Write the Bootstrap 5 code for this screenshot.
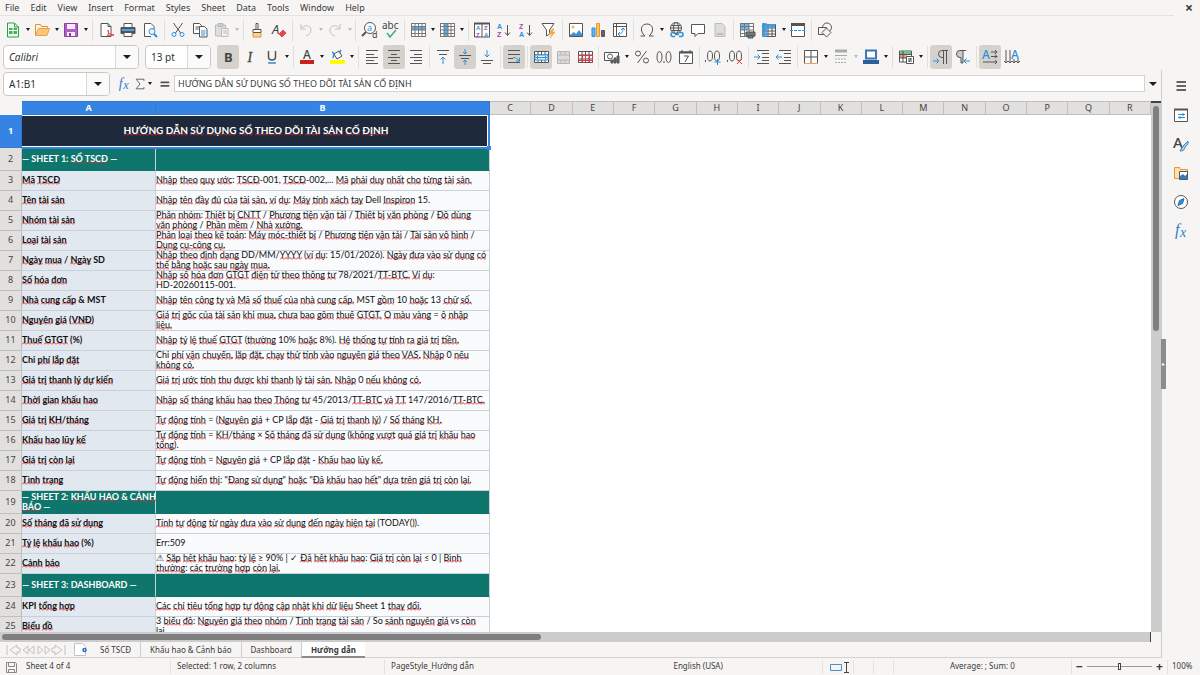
<!DOCTYPE html>
<html lang="vi">
<head>
<meta charset="utf-8">
<meta name="viewport" content="width=device-width, initial-scale=1">
<title>Hướng dẫn</title>
<link href="https://cdn.jsdelivr.net/npm/bootstrap@5.3.0/dist/css/bootstrap.min.css" rel="stylesheet">
<style>
:root{--ui:#f6f5f4;--edge:#d5d2cf;--ink:#3a3a3a;--accent:#3584e4}
body{font-family:"Noto Sans",sans-serif;font-size:9px;line-height:12px;color:var(--ink);background:var(--ui)}
button{border:0;background:none;padding:0;color:inherit;font:inherit}
svg{display:block;overflow:visible}
.menubar{height:16px;padding-right:4px}
.menus{border-bottom:1px solid #e4e2e0;margin-right:8px}
.menus a{color:inherit;text-decoration:none;padding:2px 6px 2px 5px}
.closer{font-size:14px;line-height:16px;font-weight:700;width:14px}
.toolrow{height:27px;padding-left:3px}
.toolrow.narrow{padding-left:2px}
.tool{width:22px;height:24px;border-radius:3px;flex:none}
.tool.active{background:#d5d1cd}
.tool svg{width:16px;height:16px;fill:none;stroke:#555;stroke-width:1}
.more{width:8px;height:20px;flex:none}
.narrow .more{width:7px}
.more::after,.caret::after{content:"";display:block;margin:auto;width:0;border:2px solid transparent;border-top:3px solid #1c1c1c;border-bottom:0}
.more.off::after{border-top-color:#bbb}
.caret::after{border-width:4px 4px 0}
.rule{width:5px;height:22px;flex:none;background:linear-gradient(#e2e0de,#e2e0de) center/1px 100% no-repeat}
.rule.wide{width:6px}
.combo{border:1px solid #cdc7c2;border-radius:4px;height:24px;background:#fff;overflow:hidden;flex:none}
.toolrow .combo{margin-right:6px}
.combo input{border:0;outline:0;width:0;min-width:0;padding:0 5px;font-size:10px;color:#2e3436;background:none}
.combo .caret{width:23px;flex:none;height:100%;border-left:1px solid #dcd8d4;background:#fafafa}
.formulabar{height:28px;padding-left:3px}
.formulabar .line{height:17px;border:1px solid #d5d2cf;background:#fff;color:#3a3a3a;padding:0 3px;font-size:9px;outline:0}
.gridarea{min-height:0;margin-top:3px}
.sheet{border-collapse:separate;border-spacing:0;table-layout:fixed;width:100%;font-family:Lato,sans-serif;font-size:9px;line-height:10px;color:#111}
.sheet th{font-family:"Noto Sans",sans-serif;font-size:9px;font-weight:400;color:#444;text-align:center;background:#e1e0df;border-right:1px solid #bfbfbf;border-bottom:1px solid #bfbfbf;padding:0}
.sheet thead th{height:14px;line-height:12px;border-top:1px solid #bfbfbf}
.sheet thead th:first-child{background:var(--ui);border-color:var(--ui)}
.sheet th.on,.sheet thead th.on{background:var(--accent);border-color:#3078d0;color:#fff;font-weight:700}
.sheet td{padding:0;background:#fff}
.sheet .key,.sheet .val{border-right:1px solid #cbd0d6;border-bottom:1px solid #cbd0d6}
.sheet .key{background:#e2e8f0;font-weight:700}
.sheet .val{background:#f9fbfd}
.sheet .band td.key,.sheet .band td.val{background:#0f766e;color:#fff;font-weight:700;border-bottom-color:#0f766e}
.sheet td.heading{background:#1e293b;color:#fff;font-size:10px;font-weight:700;line-height:14px;position:relative}
.box{height:19px;overflow:hidden;display:flex;align-items:center;white-space:nowrap}
.band .box{height:22px;overflow:visible}
.heading .box{height:33px;justify-content:center;padding-bottom:2px}
.selection{position:absolute;inset:0 0 -1px 0;border:solid var(--accent);border-width:0 2px 2px 0;box-shadow:inset -1px -1px #fff,inset 0 1px #fff}
.grip{position:absolute;right:-1px;bottom:-2px;width:4px;height:4px;background:var(--accent)}
.miss{background:url("data:image/svg+xml,%3Csvg xmlns='http://www.w3.org/2000/svg' width='4' height='3'%3E%3Cpath d='M0 2.500L2 .500L4 2.500' fill='none' stroke='%23e3262b' stroke-width='1'/%3E%3C/svg%3E") left bottom repeat-x}
.vtrack{width:10px;flex:none;background:#ccc;border-top:2px solid #444;padding:3px 2px}
.vthumb{height:43%;background:#7f7f7f;border-radius:3px}
.htrack{height:10px;background:#ccc;padding:2px;margin-right:10px;border-right:1px solid #444}
.hthumb{height:6px;width:47%;background:#7f7f7f;border-radius:3px}
.deck{width:39px;flex:none;border-left:1px solid #cfcdcb;position:relative;padding-top:1px}
.deck .pane{height:29px}
.deck svg{width:16px;height:16px;fill:none;stroke:#555}
.handle{position:absolute;left:-1px;top:269px;width:5px;height:50px;background:#8c8c8c;color:#fff;font-size:6px;line-height:50px;text-align:center;overflow:hidden}
.tabs{height:16px;font-size:8px;border-bottom:1px solid #d5d2cf}
.tabs a{color:inherit;text-decoration:none;padding:0 9px;line-height:15px}
.tabs a+a{border-left:1px solid #cfcdcb}
.tabs a.current{background:#fff;font-weight:700;border-bottom:2px solid #8b8b8b;height:16px}
.status{height:17px;font-size:8px}
.status>div{padding:0 6px;height:14px}
.status>div+div{border-left:1px solid #e4e2e0}
.step{font-size:12px;line-height:12px;font-weight:700}
.zoomer{appearance:none;width:65px;height:8px;background:linear-gradient(#999,#999) center/100% 1px no-repeat}
.zoomer::-webkit-slider-thumb{appearance:none;width:3px;height:7px;border:1px solid #444;background:#fff}
</style>
</head>
<body>
<div class="d-flex flex-column vh-100 overflow-hidden">
  <header>
    <div class="menubar d-flex">
      <nav class="menus d-flex flex-grow-1" id="menus"></nav>
      <button class="closer" aria-label="Close">×</button>
    </div>
    <div class="toolrow narrow d-flex align-items-center" id="standard"></div>
    <div class="toolrow d-flex align-items-center">
      <div class="combo d-flex" style="width:136px"><input class="flex-grow-1 fst-italic" aria-label="Font name" value="Calibri"><button class="caret" aria-label="Font list"></button></div>
      <div class="combo d-flex" style="width:66px"><input class="flex-grow-1" aria-label="Font size" value="13 pt"><button class="caret" aria-label="Size list"></button></div>
      <div class="d-flex align-items-center" id="formatting"></div>
    </div>
  </header>
  <div class="d-flex flex-grow-1" style="min-height:0">
    <main class="d-flex flex-column flex-grow-1" style="min-width:0">
      <div class="formulabar d-flex align-items-center">
        <div class="combo d-flex" style="width:107px"><input class="flex-grow-1" aria-label="Name box" value="A1:B1"><button class="caret" aria-label="Ranges"></button></div>
        <div class="d-flex align-items-center ps-1" id="functions"></div>
        <input class="line flex-grow-1" aria-label="Formula" value="HƯỚNG DẪN SỬ DỤNG SỔ THEO DÕI TÀI SẢN CỐ ĐỊNH">
        <button class="caret px-1" aria-label="Expand formula bar"></button>
      </div>
      <div class="gridarea d-flex flex-grow-1">
        <div class="flex-grow-1 overflow-hidden bg-white">
          <table class="sheet">
            <colgroup id="cols"><col style="width:22px"><col style="width:134px"><col style="width:334px"></colgroup>
            <thead><tr id="letters"></tr></thead>
            <tbody id="rows"></tbody>
          </table>
        </div>
        <div class="vtrack"><div class="vthumb"></div></div>
      </div>
      <div class="htrack"><div class="hthumb"></div></div>
      <nav class="tabs d-flex">
        <svg width="100" height="15" fill="none" stroke="#c4c2c0"><path d="M7 3v10M17 3l-7 5 7 5v-3h3V6h-3zM28 4l-5 4 5 4zM34 4l-5 4 5 4zM38 4l5 4-5 4zM45 4l5 4-5 4zM55 3l7 5-7 5v-3h-3V6h3zM65 3v10"/><path d="M74.500 1.500h8l3 3v9h-11z" fill="#fff"/><circle cx="84.500" cy="8" r="1.500" stroke="#2a6fc9" stroke-width="1.500"/></svg>
        <a href="#s1" class="ps-0">Số TSCĐ</a><a href="#s2">Khấu hao &amp; Cảnh báo</a><a href="#s3">Dashboard</a><a href="#s4" class="current">Hướng dẫn</a>
      </nav>
    </main>
    <aside class="deck d-flex flex-column" id="deck"><button class="handle" aria-label="Hide sidebar">▸</button></aside>
  </div>
  <footer class="status d-flex align-items-center">
    <div class="px-1"><svg width="14" height="14" fill="none" stroke="#888"><path d="M2.500 2.500h9l1 1v9h-10zM4.500 2.500v4h6v-4M4.500 12.500v-3h6v3"/></svg></div>
    <div class="border-0 px-1" style="flex:149 1 0">Sheet 4 of 4</div>
    <div style="flex:214 1 0">Selected: 1 row, 2 columns</div>
    <div style="flex:189 1 0">PageStyle_Hướng dẫn</div>
    <div class="text-center border-0" style="flex:250 1 0">English (USA)</div>
    <div style="width:31px"><svg width="20" height="14" fill="none"><path d="M1.500 4.500h11v6h-11z" stroke="#3f94c8"/><path d="M15 2.500h5M17.500 3v9M15 12.500h5" stroke="#444"/></svg></div>
    <div style="width:20px"></div><div style="width:20px"></div>
    <div class="text-center" style="flex:176 1 0">Average: ; Sum: 0</div>
    <div class="d-flex align-items-center justify-content-center gap-1" style="width:96px"><button class="step" aria-label="Zoom out">−</button><input type="range" class="zoomer" aria-label="Zoom"><button class="step" aria-label="Zoom in">+</button></div>
    <div class="px-1" style="width:33px">100%</div>
  </footer>
</div>
<script src="https://cdn.jsdelivr.net/npm/bootstrap@5.3.0/dist/js/bootstrap.bundle.min.js"></script>
<script>
const p = (d, a = '') => `<path d="${d}" ${a}/>`;
const BLUE = 'stroke="#2e8fd8"', RED = 'stroke="#e0383e"';
const glyph = (s, x, y, size, a = '') => `<text x="${x}" y="${y}" font-size="${size}" stroke="none" fill="#444" ${a}>${s}</text>`;
const letterA = (x, y, size) => glyph('A', x, y, size, 'font-family="Liberation Sans" font-weight="700" style="fill:#2e8fd8"');
const letterZ = (x, y, size) => glyph('Z', x, y, size, 'font-family="Liberation Sans" font-weight="700" style="fill:#a347ba"');
const grid = 'M1.500 2.500h14v11h-14zM1.500 6h14M1.500 10h14M5 2.500v11M8.500 2.500v11M12 2.500v11';
const icons = {
  'New': p('M2.500 1h7l4 4v10h-11z','fill="#eefaf0" stroke="#2f9e44"')+p('M4 6h8v6H4z','fill="#45b35c" stroke="none"')+p('M4 8.500h8M8 6v6','stroke="#fff"')+p('M9.500 1v4h4','stroke="#2f9e44"'),
  'Open': p('M1.500 13.500v-11h5l1 2h6v2','fill="#fff0d8" stroke="#e09434"')+p('M1.500 13.500l3-7h11l-2.500 7z','fill="#fbc77a" stroke="#e8a14a"'),
  'Save': p('M1.500 1.500h13v13h-13z','fill="#b060c4" stroke="#8e3fa6"')+p('M4 2h8v5H4zM4 10h8v4H4z','fill="#f7ecfa" stroke="none"')+p('M6 11h2v3H6z','fill="#8e3fa6" stroke="none"'),
  'Export PDF': p('M3 1.500h7l3 3v10H3z','fill="#fff"')+p('M10 1.500v3h3')+p('M8 15c3-3 3-5 2-7 0 4 3 5 6 5-3-.5-6 .5-8 2z','stroke="#e0383e"'),
  'Print': p('M4 1.500h8v4H4z','fill="#fff"')+p('M1 5.500h14v6H1z','fill="#555"')+p('M2 8h12','stroke="#4aa3e0" stroke-width="2"')+p('M4 10.500h8v4H4z','fill="#fff"'),
  'Preview': p('M12 7V4.500l-3-3H2.500v13H9','fill="#fff"')+'<circle cx="10" cy="9.500" r="3" stroke="#2e8fd8" fill="#e7f4fd"/>'+p('M12 12l3 3','stroke="#2e8fd8" stroke-width="2"'),
  'Cut': p('M3.500 1l7 10M12.500 1l-7 10')+'<circle cx="4" cy="12.500" r="2" stroke="#2e8fd8"/><circle cx="12" cy="12.500" r="2" stroke="#2e8fd8"/>',
  'Copy': p('M1.500 1.500h6l2 2v8h-8zM3.500 5h4M3.500 7h3','fill="#fff"')+p('M7.500 4.500h5l2.500 2.500v8H7.500z','fill="#fff"')+p('M9 9h4.500M9 11h4.500M9 13h4','stroke="#2e8fd8"'),
  'Paste': p('M1.500 3h10v11h-10z','fill="#ddd" stroke="#bbb"')+p('M4 1.500h5v3H4z','fill="#ccc" stroke="#bbb"')+p('M7.500 6.500h6.500v8H7.500zM9 9h4M9 11h4','fill="#f3f3f3" stroke="#bbb"'),
  'Clone': p('M7 1.500h2v6H7z','fill="#fff"')+p('M4 7.500h8v3H4z','fill="#fff"')+p('M4 11v4h8v-4','fill="#ffd28a" stroke="#e8962e"'),
  'Clear': glyph('A',1,12,13,'font-style="italic"')+p('M8 12l4-4 3 3-4 4z','fill="#e5484d" stroke="#e5484d"'),
  'Undo': p('M3 2v5h5M3 7c3-5 10-4 10 1 0 3-2 5-5 6','stroke="#c4c2c0"'),
  'Redo': p('M13 2v5H8M13 7C10 2 3 3 3 8c0 3 2 5 5 6','stroke="#c4c2c0"'),
  'Find': '<circle cx="9" cy="6" r="5.500" fill="#fff"/>'+p('M5 10l-4 4','stroke-width="2"')+glyph('a',6,9,9,'style="fill:#2e8fd8"')+glyph('d',11,16,9),
  'Spelling': glyph('abc',-1,7,10)+p('M4 11l3 4 6-7','stroke="#3fae72" stroke-width="1.500"'),
  'Row': p('M1.500 1.500h14v13h-14z','fill="#fff"')+p('M1 4h15v4H1z','fill="#55aee8" stroke="none"')+p('M1.500 1.500h14v13h-14zM1.500 4.500h14M1.500 8h14M1.500 11.500h14M5 1.500v13M8.500 1.500v13M12 1.500v13','stroke="#777"'),
  'Column': p('M1.500 1.500h14v13h-14z','fill="#fff"')+p('M5 1h4v14H5z','fill="#55aee8" stroke="none"')+p('M1.500 1.500h14v13h-14zM1.500 4.500h14M1.500 8h14M1.500 11.500h14M5 1.500v13M9 1.500v13M12 1.500v13','stroke="#777"'),
  'Sort': p('M.500 1.500h15v13.500h-15zM8 1.500v13.500','fill="#fff"')+p('M0 1.500h16','stroke-width="2"')+letterA(2,8,6)+letterZ(2,15,6)+letterZ(10,8,6)+letterA(10,15,6),
  'Sort up': letterA(1,7,7)+letterZ(1,15,7)+p('M11.500 3v10M9 10.500l2.500 3 2.500-3'),
  'Sort down': letterZ(1,7,7)+letterA(1,15,7)+p('M11.500 3v10M9 10.500l2.500 3 2.500-3'),
  'Filter': p('M2 1.500h12L9.500 8v4L6.500 14V8z','fill="#fff"')+p('M12 7l-3 5h3l-2 4 5-6h-3l2-3z','fill="#f7a93b" stroke="#f19a24" stroke-width=".500"'),
  'Image': p('M1.500 1.500h13v13h-13z','fill="#fff"')+'<circle cx="5" cy="5" r="1.500" fill="#f9b552" stroke="none"/>'+p('M2 13l4-3 2 2 3-4 3 4v2H2z','fill="#3c94d6" stroke="none"'),
  'Chart': p('M2 6h3v8.500H2z','fill="#62b5ec" stroke="#2e8fd8"')+p('M6.500 1.500h3v13h-3z','fill="#ffc171" stroke="#e8962e"')+p('M11.500 8.500h3v6h-3z','fill="#666"'),
  'Pivot': p('M1.500 1.500h13v13h-13zM1.500 4.500h13M4.500 1.500v13','fill="#fff"')+p('M6 12c4 0 5-2 5-6M9 8l2-2 2 2M8 10l-2 2 2 2',BLUE),
  'Symbol': p('M1.500 14h4.500c-6-5-4-12 2-12s8 7 2 12h4.500'),
  'Link': '<circle cx="8" cy="6" r="5.500"/><ellipse cx="8" cy="6" rx="2.500" ry="5.500"/>'+p('M2.500 6h11M3.500 3.500h9M3.500 8.500h9')+p('M7 10.500H5a2 2 0 000 4h2M11 10.500h2a2 2 0 010 4h-2M7 12.500h4','stroke="#2e8fd8" stroke-width="1.500"'),
  'Comment': p('M1.500 2.500h13v9H8l-3 3v-3H1.500z','fill="#fff"'),
  'Header': p('M3 1.500h7l3 3v10H3z','fill="#ddd" stroke="#bbb"')+p('M5 11h6v2H5z','fill="#bbb" stroke="none"'),
  'Print area': p('M1.500 1.500h13v13h-13z','fill="#fff"')+p('M1 1h9v7H1z','fill="#6bb8ee" stroke="none"')+p('M1.500 1.500h13v13h-13zM1.500 4.500h13M1.500 8h13M1.500 11.500h13M5.500 1.500v13M10 1.500v13','stroke="#777"')+p('M7 10h9v4H7z','fill="#777"')+p('M9 14h5v2H9z','fill="#4aa3e0"'),
  'Freeze': p('M1.500 2.500h13v12h-13zM1.500 6h13M1.500 9h13M1.500 12h13M7 2.500v12M11 2.500v12','fill="#fff"')+p('M1 1h5v14H1zM5 2h9v4H5z','fill="#4aa3e0" stroke="none" opacity=".85"')+p('M3 1v13M1 4h13M3 8h2',BLUE),
  'Split': p('M1.500 1.500h13v13h-13z','fill="#fff"')+p('M1 2.500h14','stroke-width="3"')+p('M0 8.500h16','stroke="#2e8fd8" stroke-dasharray="3 1"'),
  'Shapes': '<circle cx="10" cy="5.500" r="4.500"/>'+p('M1.500 5.500h8v7h-8z','fill="#f6f5f4"')+p('M9.500 6l4.500 4.500-4.500 4.500L5 10.500z','fill="#f6f5f4"'),
  'Bold': glyph('B',4,12.500,13,'font-weight="700"'),
  'Italic': glyph('I',5.500,12.500,14,'font-style="italic" font-family="Liberation Serif" style="stroke:#444;stroke-width:.3px"'),
  'Underline': p('M4.500 2v6c0 4 7 4 7 0V2','stroke-width="1.500"')+p('M4 14h8','stroke="#2e8fd8" stroke-width="1.500"'),
  'Font color': glyph('A',4,10,12,'font-weight="500"')+p('M1 13h14','stroke="#c9211e" stroke-width="4"'),
  'Highlight': p('M5 5l5-3 3 5-5 3z','fill="#fff"')+p('M3 3c2 0 2 3 1 6M12 1l-2 3','stroke="#2e8fd8" stroke-width="1.500"')+p('M1 13h15','stroke="#ffff00" stroke-width="4"'),
  'Left': p('M2 1.500h12M2 5.500h8M2 8.500h12M2 11.500h8M2 14.500h12'),
  'Center': p('M2 1.500h12M5 5.500h6M2 8.500h12M5 11.500h6M2 14.500h12'),
  'Right': p('M2 1.500h12M6 5.500h8M2 8.500h12M6 11.500h8M2 14.500h12'),
  'Top': p('M2 1.500h12M4 5.500h8')+p('M8 15V8M5.500 10.500L8 8l2.500 2.500',BLUE),
  'Middle': p('M2 6.500h12M4 9.500h8')+p('M8 0v5M6 3l2 2 2-2M8 16v-5M6 13l2-2 2 2',BLUE),
  'Bottom': p('M2 11.500h12M4 14.500h8')+p('M8 1v7M5.500 5.500L8 8l2.500-2.500',BLUE),
  'Wrap': p('M2 1.500h12M2 5.500h12M2 9.500h5M2 13.500h12')+p('M7 8.500c3 0 5 1 6 4M10 12h3.500V8.500',BLUE),
  'Merge': p(grid,'fill="#fff"')+p('M2 6h13v5H2z','fill="#e0f2ff" stroke="#2e8fd8"')+p('M3 8.500h11M5 7L3.500 8.500 5 10M12 7l1.500 1.500L12 10',BLUE),
  'Merge cells': p('M2.500 2.500h12v12h-12zM2.500 6h12M2.500 11h12M6 2.500V6M10 2.500V6M6 11v3.500M10 11v3.500','stroke="#b8b6b4" fill="#ddd"'),
  'Unmerge': p(grid,'fill="#fff"')+p('M1.500 6.500h14v5h-14zM5.500 6.500v7M8.500 6.500v7M12.500 6.500v7',RED),
  'Currency': p('M.500 3.500h14v8h-14z','fill="#fff"')+'<circle cx="6" cy="7.500" r="2.500"/>'+p('M7 14V11h2v3zM10 14V9h2v5zM13 14V7h2v7z','fill="#666"'),
  'Percent': '<circle cx="4" cy="4.500" r="2.500"/><circle cx="12" cy="11.500" r="2.500"/>'+p('M12.500 2l-9 12'),
  'Number': '<ellipse cx="3.500" cy="8" rx="2.500" ry="5.500"/><ellipse cx="12.500" cy="8" rx="2.500" ry="5.500"/>'+p('M8 12v2'),
  'Date': p('M1.500 3h13v11.500h-13z','fill="#fff"')+p('M1 3.500h14','stroke-width="2"')+p('M4 1v3M12 1v3M6 7h4.500L7 13'),
  'Add decimal': '<ellipse cx="5" cy="7" rx="2.500" ry="5"/><ellipse cx="12" cy="7" rx="2.500" ry="5"/>'+p('M.500 11v2')+p('M9.500 13h6M12.500 10v6',BLUE),
  'Delete decimal': '<ellipse cx="5" cy="7" rx="2.500" ry="5"/><ellipse cx="12" cy="7" rx="2.500" ry="5"/>'+p('M.500 11v2')+p('M10 10l5 5M15 10l-5 5',RED),
  'Indent': p('M3 1.500h12M8 4.500h7M8 8.500h7M8 11.500h7M3 14.500h12')+p('M0 8h6M3.500 5.500L6 8l-2.500 2.500',BLUE),
  'Outdent': p('M3 1.500h12M8 4.500h7M8 8.500h7M8 11.500h7M3 14.500h12')+p('M6 8H0M2.500 5.500L0 8l2.500 2.500',BLUE),
  'Borders': p('M1.500 1.500h13v13h-13zM8 1.500v13M1.500 8h13','fill="#fff"')+p('M1 14.500h14','stroke="#e8a15a"'),
  'Line style': p('M2 2h12','stroke-width="3" stroke="#aaa"')+p('M2 6.500h12','stroke="#aaa"')+p('M2 10h12M2 13.500h12','stroke="#aaa" stroke-dasharray="2 1"'),
  'Border color': p('M3 1.500h10v8H3z','fill="#fff" stroke="#3d74b8" stroke-width="2"')+p('M0 13h16','stroke="#2a6099" stroke-width="4"'),
  'Conditional': p('M1.500 2h12v11h-12z','fill="#fff"')+p('M2 2h11v3H2z','fill="#6dc486" stroke="none"')+p('M2 6h7v3H2z','fill="#f2938f" stroke="none"')+p('M1.500 5.500h12M1.500 9h7M5 2v11')+p('M8.500 7.500h7v7h-7zM10 10h4M10 12h4M13 9l-2 4','fill="#fff"'),
  'LTR': p('M15 1.500H9a3.500 3.500 0 000 7h1M10.500 1.500V15M13.500 1.500V15')+p('M0 12h6M3.500 9.500L6 12l-2.500 2.500',BLUE),
  'RTL': p('M11 1.500H5a3.500 3.500 0 000 7h1V14h2V1.500','fill="#ccc"')+p('M15 12H9M11.500 9.500L9 12l2.500 2.500',BLUE),
  'Horizontal text': glyph('A',0,10,12,'font-weight="500" style="fill:#2e8fd8"')+p('M9 3h6M9 7.500h6M1 13h14M13 1l2 2-2 2M13 5.500l2 2-2 2M13 11l2 2-2 2'),
  'Vertical text': glyph('A',7,10,12,'font-weight="500" style="fill:#2e8fd8"')+p('M2 1v13M6 1v13M10 10v4M14 10v4M0 12l2 2 2-2 2 2 2-2 2 2 2-2 2 2 2-2'),
  'Function': glyph('f',2,12,16,'font-style="italic" font-family="Liberation Serif" style="fill:#2e7fc8"')+glyph('x',7,14,14,'font-style="italic" font-family="Liberation Serif" style="fill:#2e7fc8"'),
  'Sum': p('M12.500 4.500V2.500H3.500L8 8l-4.500 5.500h9v-2'),
  'Equals': p('M4 6h10M4 10h10','stroke-width="2"'),
  'Menu': p('M3.500 4h9.500M3.500 8h9.500M3.500 12h9.500','stroke-width="1.500" stroke="#333"'),
  'Properties': p('M1.500 2.500h13v12h-13z','fill="#fff"')+p('M1 2.500h14','stroke-width="2"')+p('M5 7.500h7M5 10.500h7M10 6v3M7 9v3',BLUE),
  'Styles': glyph('A',0,12,15,'font-weight="500"')+p('M15 5l-5 5-3 5c4 0 5-2 5-4l3-3z','fill="#9fd0f2" stroke="#3c82bd"'),
  'Gallery': p('M1.500 13.500v-11h5l1 2h7v9z','fill="#fce0b5" stroke="#e8962e"')+p('M6.500 6.500h8v8h-8z','fill="#fff"')+p('M7 14v-3l3-2 2 2 2-2v5z','fill="#2e7fc8" stroke="none"'),
  'Navigator': '<circle cx="8" cy="8" r="6.500" fill="#fff"/>'+p('M11 4.500L9.500 9.500 5 11.500l1.500-5z','fill="#2e8fd8" stroke="#2e6fa8"')
};
const pressed = new Set(['Bold','Center','Middle','Wrap','Merge','LTR','Horizontal text']);
/* "|" is a separator, "||" a wider one, "v" a drop-down arrow, "o" a disabled arrow */
function bar(id, list) {
  document.getElementById(id).innerHTML = list.split(',').map(n =>
    n === '|' ? '<span class="rule"></span>' :
    n === '||' ? '<span class="rule wide"></span>' :
    n === 'v' ? '<button class="more" aria-label="More"></button>' :
    n === 'o' ? '<button class="more off" aria-label="More" disabled></button>' :
    `<button class="tool d-flex align-items-center justify-content-center${pressed.has(n) ? ' active' : ''}" aria-label="${n}"><svg viewBox="0 0 16 16">${icons[n]}</svg></button>`).join('');
}
bar('standard','New,v,Open,v,Save,v,||,Export PDF,Print,Preview,||,Cut,Copy,Paste,o,||,Clone,Clear,|,Undo,o,Redo,o,|,Find,Spelling,|,Row,v,Column,v,||,Sort,Sort up,Sort down,Filter,||,Image,Chart,Pivot,|,Symbol,v,Link,Comment,Header,|,Print area,Freeze,v,Split,|,Shapes');
bar('formatting','Bold,Italic,Underline,v,|,Font color,v,Highlight,v,|,Left,Center,Right,|,Top,Middle,Bottom,|,Wrap,|,Merge,Merge cells,Unmerge,|,Currency,v,Percent,Number,Date,|,Add decimal,Delete decimal,|,Indent,Outdent,|,Borders,v,Line style,o,Border color,v,|,Conditional,v,|,LTR,RTL,|,Horizontal text,Vertical text');
document.getElementById('functions').innerHTML = ['Function','Sum','','Equals'].map(n => n
  ? `<button class="tool d-flex align-items-center justify-content-center" style="width:${n === 'Sum' ? 12 : 20}px" aria-label="${n}"><svg viewBox="0 0 16 16" style="width:14px">${icons[n]}</svg></button>`
  : '<button class="more" aria-label="More sums"></button>').join('');
document.getElementById('deck').insertAdjacentHTML('beforeend', ['Menu','Properties','Styles','Gallery','Navigator','Function'].map(n =>
  `<button class="pane d-flex align-items-center justify-content-center" aria-label="${n}"><svg viewBox="0 0 16 16">${icons[n]}</svg></button>`).join(''));
document.getElementById('menus').innerHTML = 'File Edit View Insert Format Styles Sheet Data Tools Window Help'.split(' ').map(m => `<a href="#">${m}</a>`).join('');

const letters = [...'ABCDEFGHIJKLMNOPQR'];
document.getElementById('cols').insertAdjacentHTML('beforeend', '<col>'.repeat(16));
document.getElementById('letters').innerHTML = '<th></th>' + letters.map((l, i) => `<th class="${i < 2 ? 'on' : ''}">${l}</th>`).join('');

/* words the spelling checker accepts */
const known = new Set('SHEET DASHBOARD MST SD Sheet Dell Chi KPI Err TODAY DD MM HD CP So vs VND'.split(' '));
const spell = t => t.replace(/[\p{L}]+(-[\p{L}]+)?[.,]?/gu, w => known.has(w.replace(/[.,]$/, '')) || w === 'br' ? w : `<span class="miss">${w}</span>`);
const sheet = [
  ['— SHEET 1: SỔ TSCĐ —'],
  ['Mã TSCĐ','Nhập theo quy ước: TSCĐ-001, TSCĐ-002,... Mã phải duy nhất cho từng tài sản.'],
  ['Tên tài sản','Nhập tên đầy đủ của tài sản, ví dụ: Máy tính xách tay Dell Inspiron 15.'],
  ['Nhóm tài sản','Phân nhóm: Thiết bị CNTT / Phương tiện vận tải / Thiết bị văn phòng / Đồ dùng<br>văn phòng / Phần mềm / Nhà xưởng.'],
  ['Loại tài sản','Phân loại theo kế toán: Máy móc-thiết bị / Phương tiện vận tải / Tài sản vô hình /<br>Dụng cụ-công cụ.'],
  ['Ngày mua / Ngày SD','Nhập theo định dạng DD/MM/YYYY (ví dụ: 15/01/2026). Ngày đưa vào sử dụng có<br>thể bằng hoặc sau ngày mua.'],
  ['Số hóa đơn','Nhập số hóa đơn GTGT điện tử theo thông tư 78/2021/TT-BTC. Ví dụ:<br>HD-20260115-001.'],
  ['Nhà cung cấp & MST','Nhập tên công ty và Mã số thuế của nhà cung cấp. MST gồm 10 hoặc 13 chữ số.'],
  ['Nguyên giá (VNĐ)','Giá trị gốc của tài sản khi mua, chưa bao gồm thuế GTGT. Ô màu vàng = ô nhập<br>liệu.'],
  ['Thuế GTGT (%)','Nhập tỷ lệ thuế GTGT (thường 10% hoặc 8%). Hệ thống tự tính ra giá trị tiền.'],
  ['Chi phí lắp đặt','Chi phí vận chuyển, lắp đặt, chạy thử tính vào nguyên giá theo VAS. Nhập 0 nếu<br>không có.'],
  ['Giá trị thanh lý dự kiến','Giá trị ước tính thu được khi thanh lý tài sản. Nhập 0 nếu không có.'],
  ['Thời gian khấu hao','Nhập số tháng khấu hao theo Thông tư 45/2013/TT-BTC và TT 147/2016/TT-BTC.'],
  ['Giá trị KH/tháng','Tự động tính = (Nguyên giá + CP lắp đặt - Giá trị thanh lý) / Số tháng KH.'],
  ['Khấu hao lũy kế','Tự động tính = KH/tháng × Số tháng đã sử dụng (không vượt quá giá trị khấu hao<br>tổng).'],
  ['Giá trị còn lại','Tự động tính = Nguyên giá + CP lắp đặt - Khấu hao lũy kế.'],
  ['Tình trạng','Tự động hiển thị: "Đang sử dụng" hoặc "Đã khấu hao hết" dựa trên giá trị còn lại.'],
  ['— SHEET 2: KHẤU HAO & CẢNH<br>BÁO —'],
  ['Số tháng đã sử dụng','Tính tự động từ ngày đưa vào sử dụng đến ngày hiện tại (TODAY()).'],
  ['Tỷ lệ khấu hao (%)','Err:509'],
  ['Cảnh báo','⚠ Sắp hết khấu hao: tỷ lệ ≥ 90% | ✓ Đã hết khấu hao: Giá trị còn lại ≤ 0 | Bình<br>thường: các trường hợp còn lại.'],
  ['— SHEET 3: DASHBOARD —'],
  ['KPI tổng hợp','Các chỉ tiêu tổng hợp tự động cập nhật khi dữ liệu Sheet 1 thay đổi.'],
  ['Biểu đồ','3 biểu đồ: Nguyên giá theo nhóm / Tình trạng tài sản / So sánh nguyên giá vs còn<br>lại.']
];
const cell = (c, t) => `<td class="${c}"><div class="box"><div>${spell(t)}</div></div></td>`;
document.getElementById('rows').innerHTML =
  `<tr><th class="on">1</th><td class="heading" colspan="2"><div class="box"><div>${spell('HƯỚNG DẪN SỬ DỤNG SỔ THEO DÕI TÀI SẢN CỐ ĐỊNH')}</div></div><div class="selection"></div><div class="grip"></div></td><td colspan="16"></td></tr>` +
  sheet.map(([k, v], i) => `<tr class="${v ? '' : 'band'}"><th>${i + 2}</th>${cell('key', k)}${cell('val', v || '')}<td colspan="16"></td></tr>`).join('');
</script>
</body>
</html>
